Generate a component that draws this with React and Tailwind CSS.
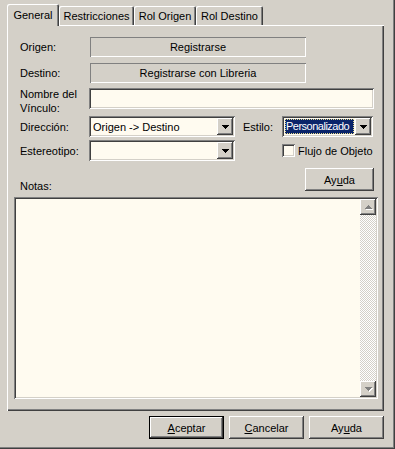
import React from "react";

const raised =
  "shadow-[inset_-1px_-1px_#404040,inset_1px_1px_#ffffff,inset_-2px_-2px_#808080,inset_2px_2px_#d4d0c8]";
const sunken =
  "shadow-[inset_1px_1px_#808080,inset_-1px_-1px_#ffffff,inset_2px_2px_#404040,inset_-2px_-2px_#d4d0c8]";
const thinSunken = "shadow-[inset_1px_1px_#808080,inset_-1px_-1px_#ffffff]";

const DownArrow = ({ color = "#000000" }) => (
  <svg width="7" height="4" shapeRendering="crispEdges">
    <path d="M0 0h7v1H0zM1 1h5v1H1zM2 2h3v1H2zM3 3h1v1H3z" fill={color} />
  </svg>
);

const UpArrow = ({ color = "#000000" }) => (
  <svg width="7" height="4" shapeRendering="crispEdges">
    <path d="M3 0h1v1H3zM2 1h3v1H2zM1 2h5v1H1zM0 3h7v1H0z" fill={color} />
  </svg>
);

const Combo = ({ width, value, selected }) => (
  <div className={`flex h-[21px] bg-[#fffbf0] p-[2px] ${sunken} ${width}`}>
    <div className="flex-1 flex items-center pr-[1px] pl-[1px] min-w-0">
      {selected ? (
        <span className="flex-1 h-[15px] leading-[13px] bg-[#0a246a] text-white border border-dotted border-[#e6d98a] tracking-[-0.5px] whitespace-nowrap overflow-hidden">
          {value}
        </span>
      ) : (
        <span className="pl-[1px] leading-[14px]">{value}</span>
      )}
    </div>
    <div className={`w-[16px] h-full bg-[#d4d0c8] flex items-center justify-center ${raised}`}>
      <DownArrow />
    </div>
  </div>
);

const Button = ({ children, width, isDefault }) => (
  <div
    className={`h-[23px] ${width} ${
      isDefault ? "border border-black" : ""
    } bg-[#d4d0c8]`}
  >
    <div className={`h-full w-full flex items-center justify-center leading-[14px] ${raised}`}>
      {children}
    </div>
  </div>
);

const Tab = ({ label, width, active }) => (
  <div
    className={`${width} ${
      active ? "h-[22px] z-10 mb-[-1px] pt-[4px]" : "h-[19px] pt-[3px]"
    } bg-[#d4d0c8] rounded-t-[2px] text-center leading-[14px] shadow-[inset_1px_1px_#ffffff,inset_-1px_0_#404040,inset_-2px_0_#808080]`}
  >
    {label}
  </div>
);

export default function App() {
  return (
    <div className="w-[395px] h-[449px] bg-[#d4d0c8] shadow-[inset_-1px_-1px_#404040,inset_-2px_-2px_#808080] flex flex-col text-[11px] text-black font-['Liberation_Sans',Arial,sans-serif]">
      {/* Tabs */}
      <div className="flex items-end h-[25px] pl-[7px]">
        <Tab label="General" width="w-[52px]" active />
        <Tab label="Restricciones" width="w-[75px]" />
        <Tab label="Rol Origen" width="w-[62px]" />
        <Tab label="Rol Destino" width="w-[67px]" />
      </div>

      {/* Panel */}
      <div className="ml-[7px] w-[377px] h-[386px] shrink-0 flex flex-col shadow-[inset_1px_1px_#ffffff,inset_-1px_-1px_#404040,inset_-2px_-2px_#808080]">
        <div className="pl-[13px] pr-[10px] pt-[12px] flex flex-col">
          <div className="flex items-center h-[20px]">
            <span className="w-[70px] leading-[14px]">Origen:</span>
            <div className={`w-[216px] h-[20px] flex items-center justify-center ${thinSunken}`}>
              Registrarse
            </div>
          </div>

          <div className="flex items-center h-[20px] mt-[6px]">
            <span className="w-[70px] leading-[14px]">Destino:</span>
            <div className={`w-[216px] h-[20px] flex items-center justify-center ${thinSunken}`}>
              Registrarse con Libreria
            </div>
          </div>

          <div className="flex items-start mt-[5px]">
            <span className="w-[69px] leading-[14px] mt-[-1px]">
              Nombre del
              <br />
              Vínculo:
            </span>
            <div className={`w-[285px] h-[21px] bg-[#fffbf0] ${sunken}`} />
          </div>

          <div className="flex items-center h-[21px] mt-[1px]">
            <span className="w-[69px] leading-[14px]">Dirección:</span>
            <Combo width="w-[146px]" value="Origen -> Destino" />
            <span className="w-[39px] ml-[8px] leading-[14px]">Estilo:</span>
            <Combo width="w-[91px]" value="Personalizado" selected />
          </div>

          <div className="flex items-center h-[21px] mt-[3px]">
            <span className="w-[69px] leading-[14px]">Estereotipo:</span>
            <Combo width="w-[146px]" value="" />
            <div className={`ml-[47px] w-[13px] h-[13px] bg-[#fffbf0] ${sunken}`} />
            <span className="ml-[3px] leading-[14px]">Flujo de Objeto</span>
          </div>

          <div className="flex items-end h-[23px] mt-[7px]">
            <span className="flex-1 leading-[14px] mb-[-2px]">Notas:</span>
            <Button width="w-[69px]">
              Ay<span className="underline">u</span>da
            </Button>
          </div>
        </div>

        {/* Notes area */}
        <div className={`ml-[7px] mt-[6px] w-[364px] h-[202px] bg-[#fffbf0] p-[2px] flex ${sunken}`}>
          <div className="flex-1" />
          <div className="w-[16px] h-full flex flex-col bg-[image:repeating-conic-gradient(#d4d0c8_0%_25%,#ffffff_0%_50%)] bg-[length:2px_2px]">
            <div className={`h-[16px] bg-[#d4d0c8] flex items-center justify-center ${raised}`}>
              <div className="relative">
                <div className="absolute left-[1px] top-[1px]">
                  <UpArrow color="#ffffff" />
                </div>
                <div className="relative">
                  <UpArrow color="#808080" />
                </div>
              </div>
            </div>
            <div className="flex-1" />
            <div className={`h-[16px] bg-[#d4d0c8] flex items-center justify-center ${raised}`}>
              <div className="relative">
                <div className="absolute left-[1px] top-[1px]">
                  <DownArrow color="#ffffff" />
                </div>
                <div className="relative">
                  <DownArrow color="#808080" />
                </div>
              </div>
            </div>
          </div>
        </div>
      </div>

      {/* Bottom buttons */}
      <div className="flex justify-end gap-[5px] pr-[11px] mt-[5px]">
        <Button width="w-[75px]" isDefault>
          <span className="underline">A</span>ceptar
        </Button>
        <Button width="w-[75px]">
          <span className="underline">C</span>ancelar
        </Button>
        <Button width="w-[75px]">
          Ay<span className="underline">u</span>da
        </Button>
      </div>
    </div>
  );
}
